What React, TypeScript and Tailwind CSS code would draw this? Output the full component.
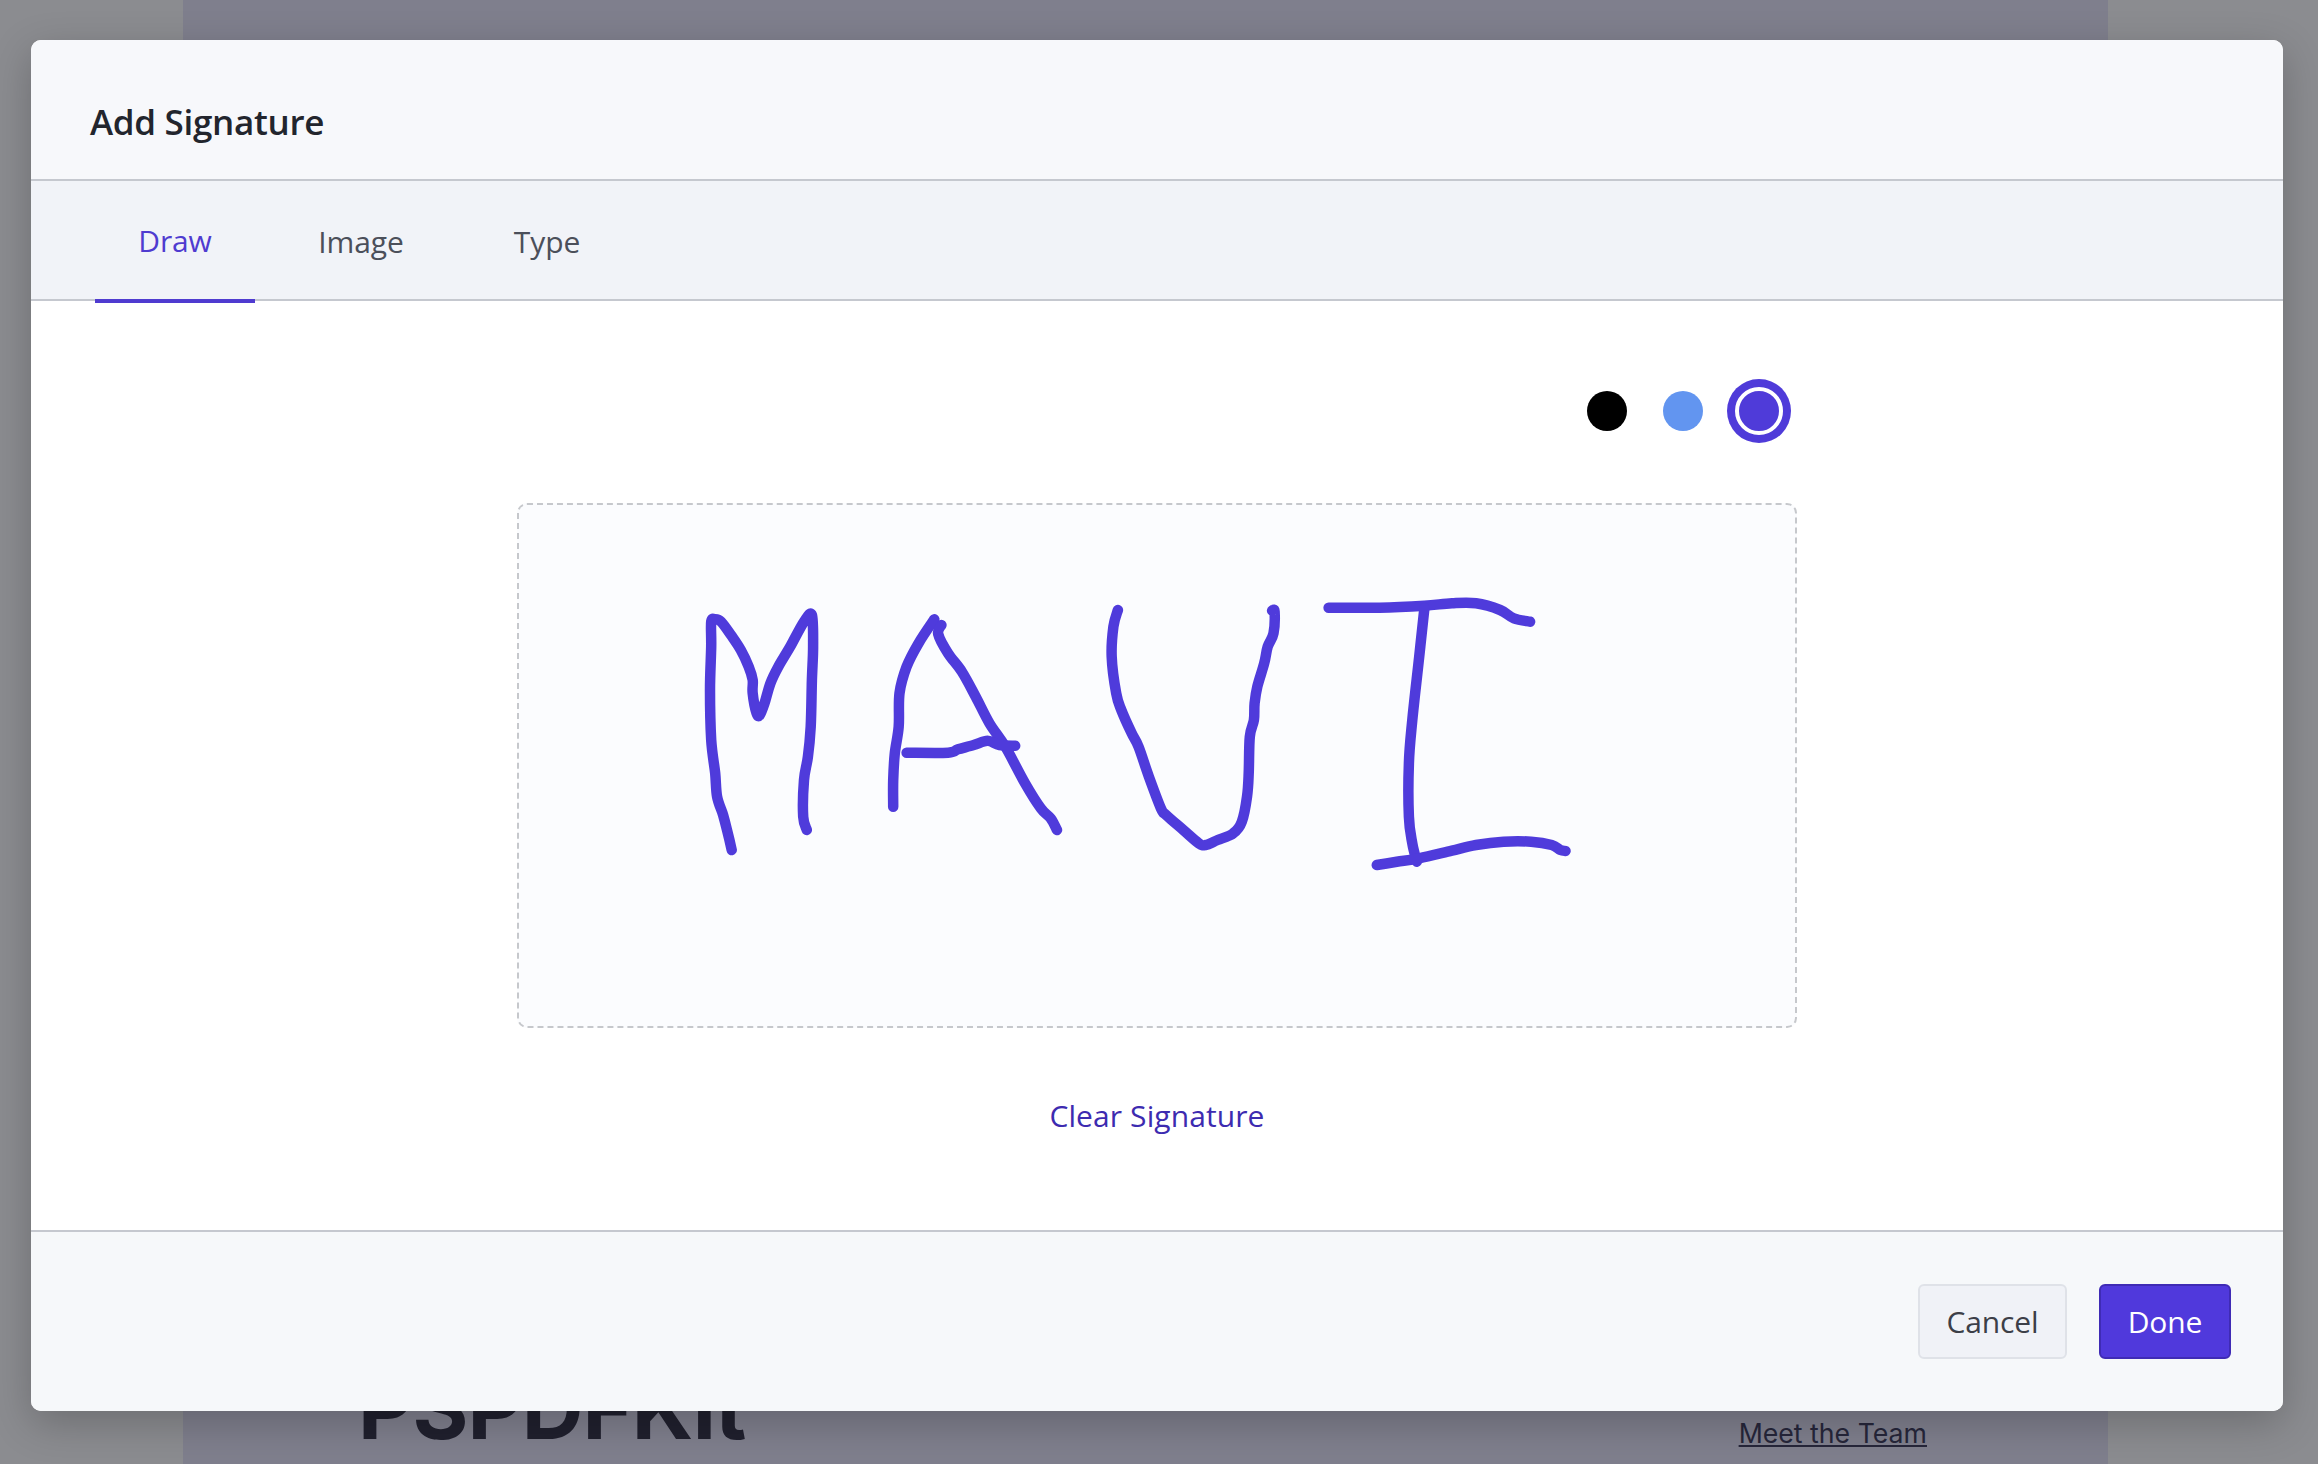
import React from "react";

type P = [number, number];
const smooth = (pts: P[]) => {
  let d = `M${pts[0][0].toFixed(1)} ${pts[0][1].toFixed(1)}`;
  for (let i = 0; i < pts.length - 1; i++) {
    const p0 = pts[Math.max(i - 1, 0)];
    const p1 = pts[i];
    const p2 = pts[i + 1];
    const p3 = pts[Math.min(i + 2, pts.length - 1)];
    const c1x = p1[0] + (p2[0] - p0[0]) / 6;
    const c1y = p1[1] + (p2[1] - p0[1]) / 6;
    const c2x = p2[0] - (p3[0] - p1[0]) / 6;
    const c2y = p2[1] - (p3[1] - p1[1]) / 6;
    d += `C${c1x.toFixed(1)} ${c1y.toFixed(1)} ${c2x.toFixed(1)} ${c2y.toFixed(1)} ${p2[0].toFixed(1)} ${p2[1].toFixed(1)}`;
  }
  return d;
};
const a = (pts: P[]) => smooth(pts.map(([X, Y]): P => [500 + X / 2.533, 480 + Y / 3]));
const b = (pts: P[]) => smooth(pts.map(([X, Y]): P => [1080 + X / 2.904, 480 + Y / 3]));

const strokes = [
  a([[587,1110],[575,1050],[565,1005],[550,950],[545,880],[535,780],[532,630],[535,500],[535,425],[545,418],[560,425],[585,465],[610,510],[630,560],[640,600],[640,640],[650,700],[658,705],[670,670],[685,610],[705,560],[735,500],[770,425],[790,405],[793,500],[790,600],[787,740],[780,830],[770,900],[768,1010],[777,1050]]),
  a([[996,980],[996,900],[1000,820],[1010,740],[1012,640],[1030,560],[1060,490],[1100,418]]),
  a([[1118,435],[1110,462],[1135,520],[1170,575],[1205,650],[1240,730],[1280,800],[1330,910],[1370,985],[1395,1015],[1411,1050]]),
  a([[1030,818],[1135,818],[1160,808],[1200,795],[1235,782],[1265,795],[1305,797]]),
  b([[110,390],[97,440],[92,530],[105,640],[120,690],[150,760],[170,800],[200,890],[235,985],[250,1005],[300,1050],[345,1090],[365,1095],[400,1080],[445,1060],[470,1025],[485,950],[490,880],[493,770],[505,720],[507,670],[515,620],[535,550],[545,500],[562,460],[565,395],[558,392]]),
  b([[722,383],[870,383],[1000,377],[1080,370],[1150,370],[1220,390],[1260,415],[1307,425]]),
  b([[1000,385],[985,530],[965,720],[955,850],[955,1010],[965,1090],[978,1145]]),
  b([[862,1155],[920,1145],[985,1135],[1080,1112],[1150,1095],[1230,1085],[1310,1085],[1370,1095],[1395,1110],[1410,1113]]),
];

const font = "font-['Open_Sans','Noto_Sans',sans-serif]";

export default function App() {
  return (
    <div className="relative flex h-[1464px] w-[2318px] overflow-hidden bg-[#8b8c90] pl-[183px]">
      <div className="flex h-full w-[1925px] items-end justify-between bg-[#7f7f8d] pb-[13px] pl-[175px] pr-[181px] font-['Inter',sans-serif] text-[#20202e]">
        <div className="text-[85.5px] font-bold leading-none tracking-[-1px]">PSPDFKit</div>
        <a className="text-[26.7px] leading-[36px] text-[#26263a] underline">Meet the Team</a>
      </div>

      <div className={`absolute left-[31px] top-[40px] flex h-[1371px] w-[2252px] flex-col overflow-hidden rounded-[10px] bg-white shadow-[0_12px_40px_rgba(0,0,0,0.22)] ${font}`}>
        <header className="flex h-[141px] shrink-0 items-center border-b-2 border-[#c5c8cf] bg-[#f7f8fb] pl-[59px] pt-[26px]">
          <h1 className="text-[35px] font-semibold tracking-[-0.3px] text-[#22252d]">Add Signature</h1>
        </header>

        <nav className="flex h-[120px] shrink-0 gap-[18px] border-b-2 border-[#c5c8cf] bg-[#f1f3f8] pl-[64px] text-[30px] tracking-[-0.1px] text-[#4b4f5a]">
          <button className="-mb-[2px] h-[122px] w-[160px] border-b-4 border-[#4f3bd0] text-[#4f3bd0]">Draw</button>
          <button className="h-[120px] w-[176px]">Image</button>
          <button className="h-[120px] w-[160px]">Type</button>
        </nav>

        <main className="flex flex-1 flex-col items-center pt-[78px]">
          <div className="flex h-[64px] w-[1280px] items-center justify-end gap-[24px] pr-[6px]">
            <span className="mr-[12px] h-[40px] w-[40px] rounded-full bg-black" />
            <span className="h-[40px] w-[40px] rounded-full bg-[#6295f0]" />
            <span className="flex h-[64px] w-[64px] items-center justify-center rounded-full bg-[#4f3bd9]">
              <span className="h-[48px] w-[48px] rounded-full border-4 border-white bg-[#4f3bd9]" />
            </span>
          </div>
          <div className="mt-[60px] h-[525px] w-[1280px] rounded-[10px] border-2 border-dashed border-[#c6c8cc] bg-[#fbfcfe]">
            <svg viewBox="519 505 1276 521" className="block h-full w-full" fill="none" stroke="#4f3bdb" strokeWidth="10.5" strokeLinecap="round" strokeLinejoin="round">
              {strokes.map((s, i) => (
                <path key={i} d={s} />
              ))}
            </svg>
          </div>
          <button className="mt-[66px] text-[30px] leading-[44px] tracking-[0.1px] text-[#3d2bb0]">Clear Signature</button>
        </main>

        <footer className="flex h-[181px] shrink-0 items-start justify-end gap-[32px] border-t-2 border-[#c5c8cf] bg-[#f6f8fa] pr-[52px] pt-[52px] text-[30px]">
          <button className="h-[75px] w-[149px] rounded-[6px] border-2 border-[#dfe2e8] bg-[#f0f2f7] tracking-[-0.15px] text-[#3c3f48]">Cancel</button>
          <button className="h-[75px] w-[132px] rounded-[6px] border-2 border-[#3f2bb5] bg-[#5039dc] tracking-[-0.1px] text-white">Done</button>
        </footer>
      </div>
    </div>
  );
}
